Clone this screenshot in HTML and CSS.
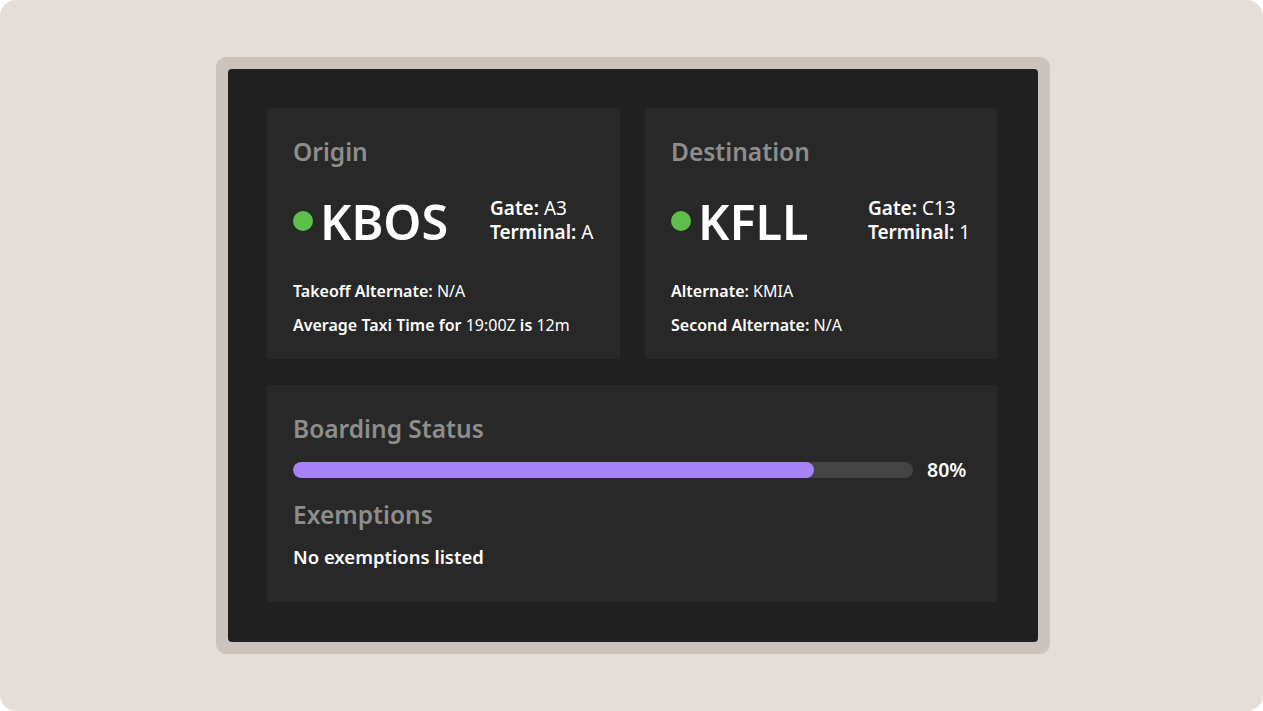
FILE: index.html
```html
<!DOCTYPE html>
<html>
<head>
<meta charset="utf-8">
<link rel="stylesheet" href="styles.css">
</head>
<body>
<div class="page">
  <div class="frame">
    <div class="screen">
      <div class="card">
        <h2 class="card-title">Origin</h2>
        <div class="airport-row">
          <div class="airport"><span class="dot"></span><span class="code">KBOS</span></div>
          <div class="gate-info">
            <div><b>Gate:</b> A3</div>
            <div><b>Terminal:</b> A</div>
          </div>
        </div>
        <div class="details">
          <div><b>Takeoff Alternate:</b> N/A</div>
          <div><b>Average Taxi Time for</b> 19:00Z <b>is</b> 12m</div>
        </div>
      </div>
      <div class="card">
        <h2 class="card-title">Destination</h2>
        <div class="airport-row">
          <div class="airport"><span class="dot"></span><span class="code">KFLL</span></div>
          <div class="gate-info">
            <div><b>Gate:</b> C13</div>
            <div><b>Terminal:</b> 1</div>
          </div>
        </div>
        <div class="details">
          <div><b>Alternate:</b> KMIA</div>
          <div><b>Second Alternate:</b> N/A</div>
        </div>
      </div>
      <div class="card wide">
        <h2 class="card-title">Boarding Status</h2>
        <div class="progress-row">
          <div class="track"><div class="fill" style="width:84%"></div></div>
          <span class="pct">80%</span>
        </div>
        <h2 class="card-title ex-title">Exemptions</h2>
        <div class="none">No exemptions listed</div>
      </div>
    </div>
  </div>
</div>
</body>
</html>
```
FILE: styles.css
```css
* { box-sizing: border-box; }
html, body { margin: 0; padding: 0; background: #ffffff; }
body { font-family: "Noto Sans", "Open Sans", sans-serif; }
.page {
  width: 1263px;
  height: 711px;
  background: #e5ddd8;
  border-radius: 16px;
  padding: 57px 0 0 216px;
}
.frame {
  width: 834px;
  height: 597px;
  background: #cbc3bc;
  border-radius: 10px;
  padding: 12px;
}
.screen {
  height: 100%;
  background: #202020;
  border-radius: 4px;
  padding: 39px 41px 40px 39px;
  display: grid;
  grid-template-columns: 353px 352px;
  grid-template-rows: 251px 217px;
  column-gap: 25px;
  row-gap: 26px;
}
.card {
  background: #282828;
  border-radius: 3px;
  padding: 27px 26px 0 26px;
  color: #ffffff;
}
.card.wide { grid-column: 1 / 3; }
.card-title {
  margin: 0;
  font-size: 24.5px;
  line-height: 34px;
  font-weight: 600;
  color: #8d8d8d;
}
.airport-row {
  display: flex;
  align-items: flex-start;
  margin-top: 21px;
}
.airport {
  display: flex;
  align-items: center;
  width: 197px;
}
.dot {
  width: 20px;
  height: 20px;
  border-radius: 50%;
  background: #5cc04a;
  margin-right: 7px;
  flex: none;
}
.code {
  font-size: 48.5px;
  line-height: 62px;
  font-weight: 600;
}
.gate-info {
  font-size: 19px;
  line-height: 24px;
  padding-top: 6px;
}
.gate-info b, .details b { font-weight: 600; }
.details {
  margin-top: 29px;
  font-size: 16px;
  line-height: 20px;
  display: flex;
  flex-direction: column;
  gap: 14px;
}
.progress-row {
  display: flex;
  align-items: center;
  margin-top: 10px;
}
.track {
  width: 620px;
  height: 16px;
  background: #444444;
  border-radius: 8px;
  overflow: hidden;
}
.fill {
  height: 100%;
  background: #a883f8;
  border-radius: 8px;
}
.pct {
  margin-left: 14px;
  font-size: 19.5px;
  font-weight: 600;
}
.ex-title { margin-top: 15px; }
.none {
  margin-top: 13px;
  font-size: 18.5px;
  font-weight: 600;
  line-height: 24px;
}
```
